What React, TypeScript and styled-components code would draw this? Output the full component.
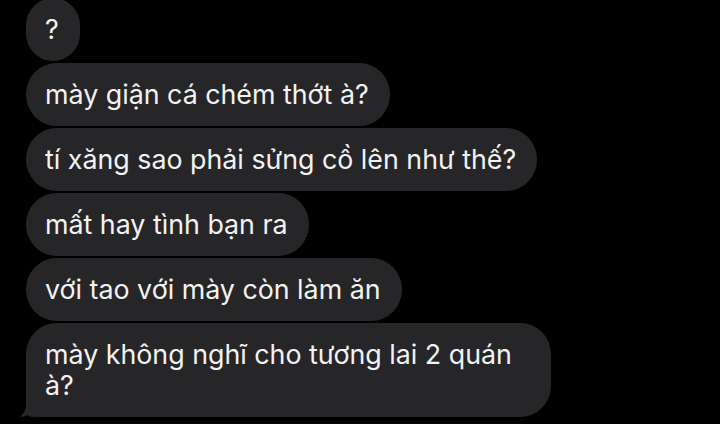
import { FC } from 'react';
import styled, { createGlobalStyle } from 'styled-components';

// #region styles
const GlobalStyle = createGlobalStyle`
  html, body {
    margin: 0;
    padding: 0;
    background: #000;
    overflow: hidden;
  }
`;

const Thread = styled.div`
  display: flex;
  flex-direction: column;
  align-items: flex-start;
  gap: 2px;
  margin-top: -2px;
  padding-left: 26px;
  width: 720px;
  height: 426px;
  box-sizing: border-box;
  background: #000;
`;

const Bubble = styled.div<{ $tail?: boolean; $wrap?: number }>`
  position: relative;
  box-sizing: border-box;
  max-width: ${(p) => (p.$wrap ? `${p.$wrap}px` : 'none')};
  padding: 16px 21px 16px 19px;
  border-radius: 31px;
  border-bottom-left-radius: ${(p) => (p.$tail ? '16px' : '31px')};
  background: #262628;
  color: #f2f2f2;
  font-family: Inter, "Noto Sans", sans-serif;
  font-size: 26.8px;
  line-height: 31px;
  white-space: pre-wrap;
`;

const Tail = styled.svg`
  position: absolute;
  left: -7px;
  bottom: 0;
  width: 24px;
  height: 26px;
`;
// #endregion

interface Message {
  text: string;
  wrap?: number;
}

const messages: Message[] = [
  { text: '?' },
  { text: 'mày giận cá chém thớt à?' },
  { text: 'tí xăng sao phải sửng cồ lên như thế?' },
  { text: 'mất hay tình bạn ra' },
  { text: 'với tao với mày còn làm ăn' },
  { text: 'mày không nghĩ cho tương lai 2 quán à?', wrap: 525 },
];

const App: FC = () => {
  return <>
    <GlobalStyle />
    <Thread>
      {messages.map((msg, i) => {
        const last = i === messages.length - 1;
        return <Bubble key={`msg-${i}`} $tail={last} $wrap={msg.wrap}>
          {msg.text}
          {
            last &&
            <Tail viewBox="0 0 24 26">
              <path
                d="M7 0 L24 0 L24 26 L16 26 C12 26 9.5 25 8.5 24 C6.5 25.3 3.5 26 0.5 26 C3.5 24 7 20 7 13 Z"
                fill="#262628"
              />
            </Tail>
          }
        </Bubble>;
      })}
    </Thread>
  </>;
};

export default App;
